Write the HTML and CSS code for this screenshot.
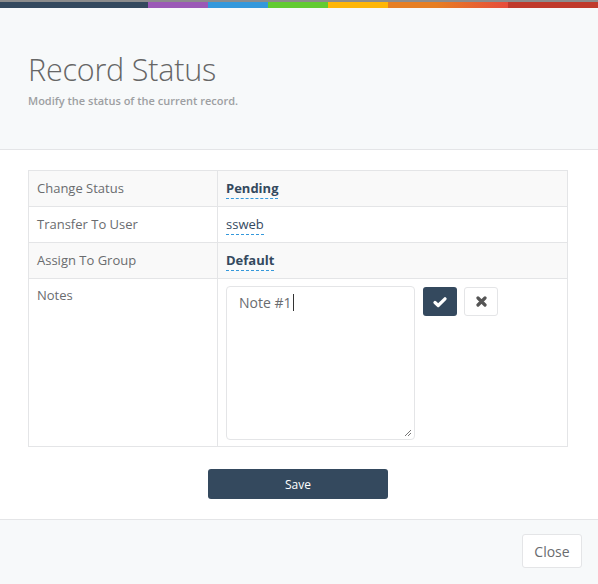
FILE: index.html
```html
<!DOCTYPE html>
<html>
<head>
<meta charset="utf-8">
<link rel="stylesheet" href="styles.css">
</head>
<body>
<div class="modal">
  <div class="colorbar">
    <span class="seg c1"></span><span class="seg c2"></span><span class="seg c3"></span><span class="seg c4"></span><span class="seg c5"></span><span class="seg c6"></span><span class="seg c7"></span>
  </div>
  <div class="header">
    <h1 class="title">Record Status</h1>
    <p class="subtitle">Modify the status of the current record.</p>
  </div>
  <div class="body">
    <table class="grid">
      <tr class="striped">
        <td class="label">Change Status</td>
        <td class="value"><span class="editable strong">Pending</span></td>
      </tr>
      <tr>
        <td class="label">Transfer To User</td>
        <td class="value"><span class="editable">ssweb</span></td>
      </tr>
      <tr class="striped">
        <td class="label">Assign To Group</td>
        <td class="value"><span class="editable strong">Default</span></td>
      </tr>
      <tr class="notes-row">
        <td class="label">Notes</td>
        <td class="value">
          <div class="notes-edit">
            <div class="textarea">Note #1<span class="caret"></span>
              <svg class="grip" width="9" height="9" viewBox="0 0 9 9"><path d="M8 2 L2 8 M8 5 L5 8" stroke="#777" stroke-width="1"/></svg>
            </div>
            <button class="btn-ok" type="button">
              <svg width="14" height="12" viewBox="0 0 14 12"><path d="M2 6.5 L5.2 9.5 L12 2.8" fill="none" stroke="#fff" stroke-width="3.2" stroke-linecap="round" stroke-linejoin="round"/></svg>
            </button>
            <button class="btn-cancel" type="button">
              <svg width="11" height="11" viewBox="0 0 11 11"><path d="M2 2 L9 9 M9 2 L2 9" stroke="#555" stroke-width="3.2" stroke-linecap="round"/></svg>
            </button>
          </div>
        </td>
      </tr>
    </table>
    <div class="save-wrap"><button class="btn-save" type="button">Save</button></div>
  </div>
  <div class="footer">
    <button class="btn-close" type="button">Close</button>
  </div>
</div>
</body>
</html>
```
FILE: styles.css
```css
html, body {
  margin: 0;
  padding: 0;
  background: #fff;
}
body {
  font-family: "Open Sans", "Liberation Sans", sans-serif;
  color: #666;
}
.modal {
  width: 598px;
  height: 584px;
  display: flex;
  flex-direction: column;
  overflow: hidden;
}
.colorbar {
  display: flex;
  height: 6px;
  border-top: 2px solid #8c8c8c;
}
.seg { display: block; height: 6px; }
.c1 { width: 148px; background: #34495e; }
.c2 { width: 60px; background: #9b59b6; }
.c3 { width: 60px; background: #3498db; }
.c4 { width: 60px; background: #62cb31; }
.c5 { width: 60px; background: #ffb606; }
.c6 { width: 120px; background: linear-gradient(to right, #e67e22 0%, #e67e22 40%, #e74c3c 100%); }
.c7 { flex: 1; background: #c0392b; }

.header {
  background: #f7f9fa;
  border-bottom: 1px solid #e4e5e7;
  padding: 0 28px;
  box-sizing: border-box;
  height: 142px;
}
.title {
  margin: 0;
  padding-top: 41px;
  font-size: 30.5px;
  font-weight: 300;
  line-height: 40px;
  color: #666666;
  letter-spacing: -0.2px;
}
.subtitle {
  margin: 5px 0 0 0;
  font-size: 11px;
  font-weight: 600;
  color: #9d9fa2;
  line-height: 14px;
}

.body {
  padding: 20px 30px 0 28px;
  flex: 1;
}
.grid {
  width: 540px;
  border-collapse: collapse;
  font-size: 13px;
}
.grid td {
  border: 1px solid #e4e5e7;
  padding: 0 8px 2px 8px;
  height: 33px;
  vertical-align: middle;
  line-height: 20px;
}
.grid tr.striped td { background: #f9f9f9; }
.grid td.label {
  width: 172px;
  color: #6a6c6f;
}
.grid td.value { color: #34495e; }
.editable {
  border-bottom: 1px dashed #3498db;
  padding-bottom: 1px;
}
.editable.strong { font-weight: 700; }

.notes-row td {
  vertical-align: top;
  height: auto;
  padding-top: 7px;
  padding-bottom: 6px;
}
.notes-row td.label { padding-top: 6px; }
.notes-edit {
  display: flex;
  align-items: flex-start;
}
.textarea {
  position: relative;
  width: 189px;
  height: 154px;
  box-sizing: border-box;
  border: 1px solid #e4e5e7;
  border-radius: 4px;
  background: #fff;
  padding: 7px 12px;
  font-size: 14px;
  line-height: 18px;
  color: #6a6c6f;
}
.caret {
  display: inline-block;
  width: 1px;
  height: 17px;
  background: #333;
  vertical-align: -3px;
  margin-left: 1px;
}
.grip {
  position: absolute;
  right: 2px;
  bottom: 2px;
}
.btn-ok {
  margin-left: 8px;
  margin-top: 1px;
  width: 34px;
  height: 29px;
  border: none;
  border-radius: 3px;
  background: #34495e;
  display: flex;
  align-items: center;
  justify-content: center;
  padding: 0;
}
.btn-cancel {
  margin-left: 7px;
  margin-top: 1px;
  width: 34px;
  height: 29px;
  border: 1px solid #e4e5e7;
  border-radius: 3px;
  background: #fff;
  display: flex;
  align-items: center;
  justify-content: center;
  padding: 0;
}

.save-wrap {
  display: flex;
  justify-content: center;
  padding-top: 22px;
  width: 540px;
}
.btn-save {
  width: 180px;
  height: 30px;
  border: none;
  border-radius: 3px;
  background: #34495e;
  color: #fff;
  font-family: "Open Sans", "Liberation Sans", sans-serif;
  font-size: 12px;
  font-weight: 400;
}

.footer {
  background: #f7f9fa;
  border-top: 1px solid #e4e5e7;
  height: 65px;
  box-sizing: border-box;
  display: flex;
  justify-content: flex-end;
  align-items: flex-start;
  padding: 14px 16px 0 0;
}
.btn-close {
  width: 60px;
  height: 34px;
  border: 1px solid #e4e5e7;
  border-radius: 3px;
  background: #fff;
  color: #6a6c6f;
  font-family: "Open Sans", "Liberation Sans", sans-serif;
  font-size: 14px;
  padding: 0;
}
```
